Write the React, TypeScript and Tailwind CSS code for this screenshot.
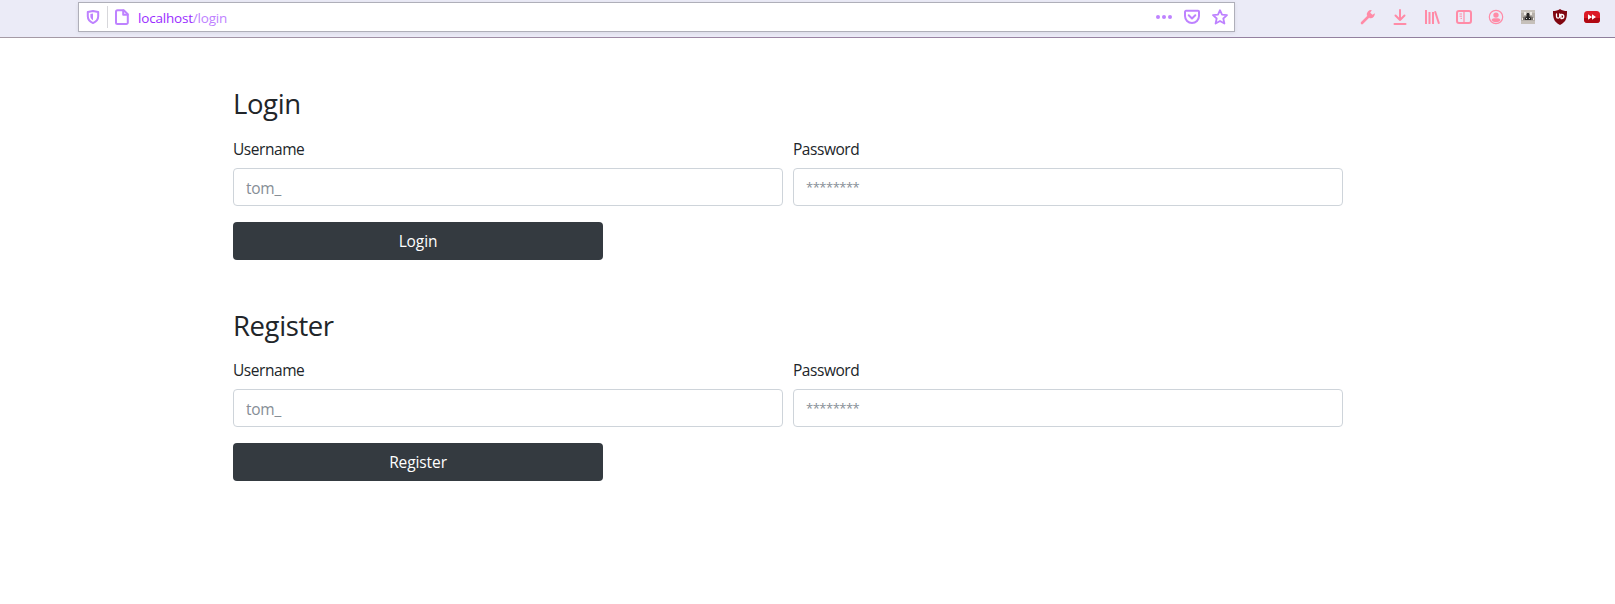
import type { ReactNode } from "react";

function Icon({ children, className = "" }: { children: ReactNode; className?: string }) {
  return (
    <svg viewBox="0 0 16 16" width="16" height="16" fill="none" className={"shrink-0 " + className} strokeWidth="2" strokeLinecap="round" strokeLinejoin="round">
      {children}
    </svg>
  );
}

function AddressBar() {
  return (
    <div className="mt-[2px] ml-[78px] flex h-[30px] w-[1157px] shrink-0 items-center border border-[#afafb9] bg-white pl-[6px] pr-[6px] text-[#be82ff] shadow-[0_1px_4px_rgba(0,0,0,0.08)]">
      <Icon>
        <path d="M8 1.900 13.200 3v4.200c0 3.200-1.900 5.400-5.200 6.900-3.300-1.500-5.200-3.700-5.200-6.900V3z" stroke="currentColor" />
        <path d="M8 4.600v6.600C6.400 10.200 5.400 9 5.400 7.200V5.100z" fill="currentColor" />
      </Icon>
      <div className="ml-[6px] h-[22px] w-px bg-[#d7d7db]" />
      <Icon className="ml-[6px]">
        <path d="M3.500 1.200h6.200L13.800 5.300v8.200a1.500 1.500 0 0 1-1.500 1.500H3.500A1.500 1.500 0 0 1 2 13.500V2.700a1.500 1.500 0 0 1 1.500-1.500z" stroke="currentColor" />
        <path d="M9.200 1.500v4.300h4.300" stroke="currentColor" />
      </Icon>
      <span className="ml-[8px] pt-px font-['Open_Sans','Noto_Sans',sans-serif] text-[13.5px] leading-[20px] tracking-[-0.2px]">
        <span className="text-[#9a2cff]">localhost</span>/login
      </span>
      <div className="ml-auto flex items-center gap-[12px]">
        <Icon>
          <g fill="currentColor">
            <circle cx="2" cy="8" r="2" />
            <circle cx="8" cy="8" r="2" />
            <circle cx="14" cy="8" r="2" />
          </g>
        </Icon>
        <Icon>
          <path d="M2 1.800h12a1 1 0 0 1 1 1V7A7 7 0 0 1 1 7V2.800a1 1 0 0 1 1-1z" stroke="currentColor" />
          <path d="m4.700 6.300 3.300 3.200 3.300-3.200" stroke="currentColor" />
        </Icon>
        <Icon>
          <path d="m8 1.200 2 4.500 5 .5-3.700 3.300 1.100 5L8 12l-4.400 2.500 1.100-5L1 6.200l5-.5z" stroke="currentColor" strokeWidth="1.800" />
        </Icon>
      </div>
    </div>
  );
}

function Toolbar() {
  return (
    <div className="mt-[2px] mr-[15px] flex h-[30px] items-center gap-[16px] text-[#ff8ba7]">
      <Icon>
        <path d="M2 14 9 7" stroke="currentColor" strokeWidth="2.600" />
        <path d="M14.800 4.300 12.500 5.800 10.200 3.700 11.800 1.200A4.300 4.300 0 0 0 6.800 6.200L9.800 9.200A4.300 4.300 0 0 0 14.800 4.300z" fill="currentColor" />
      </Icon>
      <Icon>
        <path d="M8 1v9.500M3.500 6.500 8 11l4.500-4.500M2.500 15h11" stroke="currentColor" />
      </Icon>
      <Icon>
        <path d="M2 1v14M5.500 3v12M9 3v12M11 2.200 15 14.800" stroke="currentColor" strokeLinecap="butt" />
      </Icon>
      <Icon>
        <rect x="1" y="2" width="14" height="12" rx="2" stroke="currentColor" />
        <path d="M8 2v12" stroke="currentColor" strokeWidth="1.200" />
        <path d="M3.500 5H6M3.500 7.200H6M4.500 9.400H6" stroke="currentColor" strokeWidth="1" strokeLinecap="butt" />
      </Icon>
      <Icon>
        <circle cx="8" cy="8" r="6.700" stroke="currentColor" strokeWidth="1.200" />
        <circle cx="8" cy="6.100" r="2.700" fill="currentColor" />
        <path d="M3.500 11c.5-1.500 1.800-1.800 4.500-1.800s4 .3 4.500 1.800C11.500 12.500 10 13.200 8 13.200S4.500 12.500 3.500 11z" fill="currentColor" />
      </Icon>
      <Icon>
        <rect x="1" y="1" width="14" height="14" rx="1" fill="#b5afa9" />
        <path d="M1 1h14v3H1z" fill="#c8c2bb" />
        <path d="M1 12h14v3H1z" fill="#c6c0ba" />
        <path d="M4 3h2v3H4zM10 3h2v3h-2zM2 9h2v2H2zM12 9h2v2h-2z" fill="#eeeae5" />
        <path d="M3 11V8l3-1V5h4v2l3 1v3z" fill="#77716c" />
        <path d="M7 4h2v3l2 2v2H5V9l2-2z" fill="#292727" />
        <path d="M6 9h1v1H6zM9 9h1v1H9z" fill="#ddd" />
      </Icon>
      <Icon>
        <path d="M8 0c2 1.500 4.500 2 7 2 0 7-.5 10.500-7 14C1.500 12.500 1 9 1 2c2.500 0 5-.5 7-2z" fill="#800610" />
        <path d="M4.500 5v2.500a1.600 1.600 0 0 0 3.200 0V5M9 5.500v4h.8a2 2 0 0 0 0-4z" stroke="#fff" strokeWidth="1.300" />
      </Icon>
      <Icon>
        <rect x="0" y="2" width="16" height="12" rx="3.500" fill="#dc1a26" />
        <path d="M0 9h16v1.500a3.500 3.500 0 0 1-3.500 3.500h-9A3.500 3.500 0 0 1 0 10.500z" fill="#b00812" />
        <path d="m4 5.200 4 2.800-4 2.800zM8 5.200l4 2.800-4 2.800z" fill="#fff" />
      </Icon>
    </div>
  );
}

function AccountForm({ title }: { title: string }) {
  const field = "block h-[38px] w-full rounded-[4px] border border-[#ced4da] bg-white px-3 text-[#495057] placeholder:text-[#868e96] outline-none";
  return (
    <form className="text-[#212529]" onSubmit={(e) => e.preventDefault()}>
      <h3 className="mb-[15.2px] text-[27.5px] leading-[33.6px] tracking-[-0.4px]">{title}</h3>
      <div className="mb-4 grid grid-cols-2 gap-[10px] text-[15.5px] leading-6 tracking-[-0.45px]">
        <label className="block">
          <span className="mb-2 block pt-[2px] leading-[22px]">Username</span>
          <input className={field + " pt-px tracking-[-0.25px]"} placeholder="tom_" />
        </label>
        <label className="block">
          <span className="mb-2 block pt-[2px] leading-[22px]">Password</span>
          <input type="password" className={field + " text-[13px] tracking-[-0.5px]"} placeholder="********" />
        </label>
      </div>
      <button className="block h-[38px] w-[370px] rounded-[4px] bg-[#343a40] text-[15.5px] leading-6 tracking-[-0.1px] text-white">{title}</button>
    </form>
  );
}

export default function App() {
  return (
    <div className="h-[604px] overflow-hidden bg-white">
      <header className="bg-[#ebebf7]">
        <div className="flex h-[37px] items-start justify-between">
          <AddressBar />
          <Toolbar />
        </div>
        <div className="h-px bg-linear-to-r from-[#a59ba5] via-[#9c84a4] to-[#8f7f9c]" />
      </header>
      <main className="ml-[233px] flex w-[1110px] flex-col gap-[48.4px] pt-[49.4px] font-['Open_Sans','Noto_Sans',sans-serif]">
        <AccountForm title="Login" />
        <AccountForm title="Register" />
      </main>
    </div>
  );
}
